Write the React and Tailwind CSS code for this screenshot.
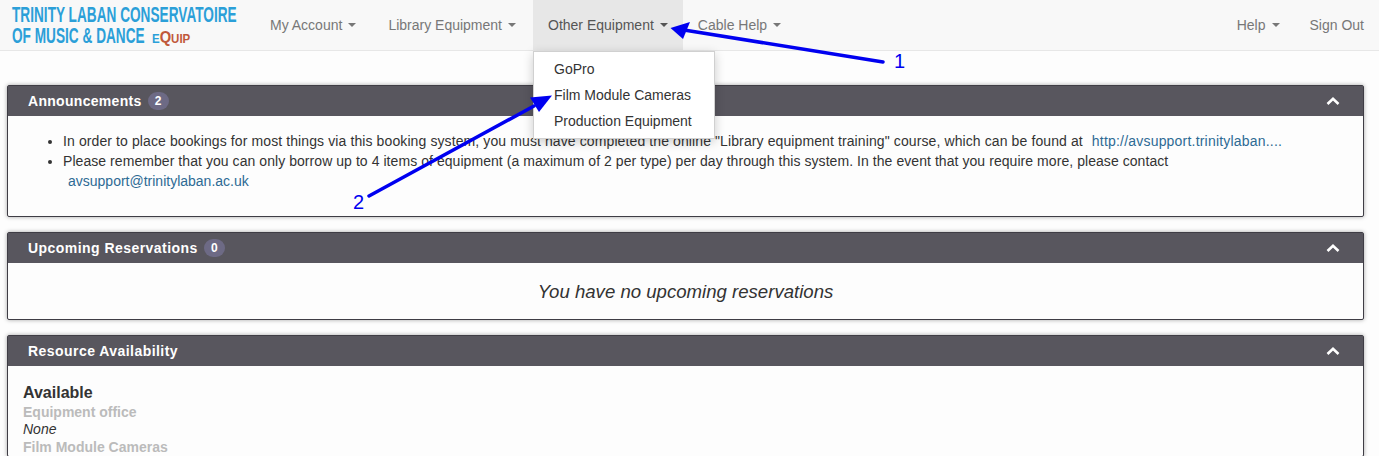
const F = "font-['Liberation_Sans',Arial,sans-serif]";

function Caret() {
  return <span className="ml-[6px] inline-block w-0 h-0 align-middle border-t-4 border-x-4 border-x-transparent border-t-current"></span>;
}

function NavItem({ label, caret = true, active = false, extra = "" }) {
  return (
    <div className={`h-[50px] flex items-center px-[15px] text-[14px] whitespace-nowrap ${active ? "bg-[#e7e7e7] text-[#555555]" : "text-[#777777]"} ${extra}`}>
      <span>{label}</span>
      {caret && <Caret />}
    </div>
  );
}

function Logo() {
  return (
    <svg width="255" height="50" viewBox="0 0 255 50" className="block shrink-0">
      <g fontFamily="'Liberation Sans',Arial,sans-serif" fontWeight="700">
        <text transform="translate(12 22) scale(0.635 1)" fontSize="21.5" fill="#2b9fd8">TRINITY LABAN CONSERVATOIRE</text>
        <text transform="translate(12 43) scale(0.635 1)" fontSize="21.5" fill="#2b9fd8">OF MUSIC &amp; DANCE</text>
        <text transform="translate(152 43) scale(0.92 1)" fill="#c0583a">
          <tspan fontSize="12.5" fill="#2b9fd8">E</tspan>
          <tspan fontSize="16">Q</tspan>
          <tspan fontSize="12.5">UIP</tspan>
        </text>
      </g>
    </svg>
  );
}

function Chevron() {
  return (
    <svg width="14" height="10" viewBox="0 0 14 10" className="block">
      <path d="M1.5 8 L7 2.8 L12.5 8" fill="none" stroke="#ffffff" strokeWidth="2.6" />
    </svg>
  );
}

function Panel({ title, badge, titleClass = "tracking-[0.45px]", children }) {
  return (
    <section className="ml-[7px] mr-[15px] mb-[15px] bg-[#fdfdfd] border border-[#3f3d45] rounded-[2px] shadow-[0_0_4px_rgba(0,0,0,0.35)]">
      <header className="h-[30px] bg-[#58565e] flex items-center justify-between pl-[20px] pr-[23px]">
        <div className="flex items-center text-white font-bold text-[14px]">
          <span className={titleClass}>{title}</span>
          {badge !== undefined && (
            <span className="ml-[6px] h-[18px] min-w-[21px] px-[7px] rounded-[10px] bg-[#6d6a85] text-[12px] leading-[18px] text-center">{badge}</span>
          )}
        </div>
        <Chevron />
      </header>
      {children}
    </section>
  );
}

function Overlay() {
  return (
    <svg width="1379" height="456" viewBox="0 0 1379 456" className="absolute left-0 top-0 pointer-events-none">
      <path d="M883 62 L684 30" stroke="#0000f0" strokeWidth="3.5" strokeLinecap="round" fill="none" />
      <path d="M670.5 28 L690 22 L683 39 Z" fill="#0000f0" />
      <path d="M369 196 L534 106" stroke="#0000f0" strokeWidth="3.5" strokeLinecap="round" fill="none" />
      <path d="M552 95.5 L530 97.5 L539 112 Z" fill="#0000f0" />
    </svg>
  );
}

export default function App() {
  return (
    <div className={`relative w-[1379px] h-[456px] overflow-hidden bg-[#fdfdfd] text-[14px] leading-[20px] text-[#333333] ${F}`}>
      <nav className="h-[51px] bg-[#f8f8f8] border-b border-[#e7e7e7] flex items-start">
        <Logo />
        <NavItem label="My Account" extra="pr-[17px]" />
        <NavItem label="Library Equipment" extra="pr-[17px]" />
        <NavItem label="Other Equipment" active />
        <NavItem label="Cable Help" />
        <div className="ml-auto flex">
          <NavItem label="Help" />
          <NavItem label="Sign Out" caret={false} />
        </div>
      </nav>

      <main className="pt-[34px]">
        <Panel title="Announcements" badge="2" titleClass="tracking-[0.3px]">
          <ul className="list-disc pl-[55px] pr-[20px] pt-[15px] pb-[25px]">
            <li className="whitespace-nowrap">
              <span className="tracking-[0.105px]">In order to place bookings for most things via this booking system, you must have completed the online "Library equipment training" course, which can be found at</span>
              <a className="ml-[9px] text-[#2d6a94] tracking-[0.2px]">http://avsupport.trinitylaban....</a>
            </li>
            <li className="whitespace-nowrap">
              <span className="tracking-[0.06px]">Please remember that you can only borrow up to 4 items of equipment (a maximum of 2 per type) per day through this system. In the event that you require more, please contact</span>
              <br />
              <a className="ml-[5px] text-[#2d6a94]">avsupport@trinitylaban.ac.uk</a>
            </li>
          </ul>
        </Panel>
        <Panel title="Upcoming Reservations" badge="0">
          <p className="h-[56px] pt-[1px] flex items-center justify-center italic text-[18.6px]">You have no upcoming reservations</p>
        </Panel>
        <Panel title="Resource Availability">
          <div className="pl-[15px] pt-[16px]">
            <h4 className="text-[16px] font-bold leading-[21px]">Available</h4>
            <div className="font-bold text-[#bbbbbb] leading-[18px]">Equipment office</div>
            <div className="italic leading-[17px]">None</div>
            <div className="font-bold text-[#bbbbbb] leading-[18px]">Film Module Cameras</div>
          </div>
        </Panel>
      </main>

      <div className="absolute left-[533px] top-[51px] w-[182px] h-[88px] py-[5px] bg-white border border-[#d0d0d0] shadow-[0_3px_10px_rgba(0,0,0,0.2)]">
        {["GoPro", "Film Module Cameras", "Production Equipment"].map((t) => (
          <div key={t} className="h-[26px] pl-[20px] leading-[24px] whitespace-nowrap">{t}</div>
        ))}
      </div>

      <Overlay />
      <span className="absolute left-[894px] top-[50px] text-[20px] leading-[22px] text-[#0000f0]">1</span>
      <span className="absolute left-[353px] top-[191px] text-[20px] leading-[22px] text-[#0000f0]">2</span>
    </div>
  );
}
